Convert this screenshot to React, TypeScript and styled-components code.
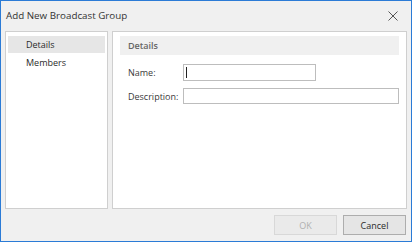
import styled, { createGlobalStyle } from "styled-components";

const GlobalStyle = createGlobalStyle`
  html, body {
    margin: 0;
    padding: 0;
    background: #ffffff;
  }
  * {
    box-sizing: border-box;
  }
`;

const App = () => {
  return (
    <>
      <GlobalStyle />
      <Dialog>
        <TitleBar>
          <Title>Add New Broadcast Group</Title>
          <CloseButton aria-label="Close">
            <svg width="10" height="10" viewBox="0 0 10 10">
              <path d="M0.5 0.5 L9.5 9.5 M9.5 0.5 L0.5 9.5" stroke="#555555" strokeWidth="1" />
            </svg>
          </CloseButton>
        </TitleBar>
        <Body>
          <NavPanel>
            <NavItem $selected>Details</NavItem>
            <NavItem>Members</NavItem>
          </NavPanel>
          <ContentPanel>
            <SectionHeader>Details</SectionHeader>
            <Form>
              <FieldRow>
                <Label>Name:</Label>
                <TextInput $width={133} $height={17} />
                <Caret />
              </FieldRow>
              <FieldRow>
                <Label>Description:</Label>
                <TextInput $width={216} $height={16} />
              </FieldRow>
            </Form>
          </ContentPanel>
        </Body>
        <Footer>
          <Button disabled>OK</Button>
          <Button>Cancel</Button>
        </Footer>
      </Dialog>
    </>
  );
};

const Dialog = styled.div`
  width: 412px;
  height: 242px;
  border: 1px solid #2b7bd6;
  background: #f0f0f0;
  display: flex;
  flex-direction: column;
  font-family: "Open Sans", "Noto Sans", sans-serif;
  font-size: 9px;
  color: #2a2a2a;
`;

const TitleBar = styled.div`
  height: 30px;
  display: flex;
  align-items: center;
  justify-content: space-between;
  padding: 0 13px 1px 5px;
`;

const Title = styled.div`
  font-size: 9.8px;
  color: #333333;
`;

const CloseButton = styled.div`
  display: flex;
  align-items: center;
`;

const Body = styled.div`
  display: flex;
  gap: 4px;
  padding: 0 4px;
  height: 178px;
`;

const NavPanel = styled.div`
  width: 103px;
  background: #ffffff;
  border: 1px solid #cfcfcf;
  padding: 4px 2px;
  display: flex;
  flex-direction: column;
  gap: 1px;
`;

const NavItem = styled.div<{ $selected?: boolean }>`
  height: 17px;
  line-height: 17px;
  padding-left: 18px;
  background: ${(p) => (p.$selected ? "#e6e6e6" : "transparent")};
`;

const ContentPanel = styled.div`
  flex: 1;
  background: #ffffff;
  border: 1px solid #cfcfcf;
  padding: 4px 7px;
  display: flex;
  flex-direction: column;
`;

const SectionHeader = styled.div`
  height: 19px;
  line-height: 19px;
  background: #f0f0f0;
  padding-left: 8px;
  color: #666666;
  font-weight: 600;
`;

const Form = styled.div`
  display: flex;
  flex-direction: column;
  gap: 7px;
  padding: 9px 0 0 8px;
`;

const FieldRow = styled.div`
  display: flex;
  align-items: center;
  position: relative;
`;

const Label = styled.div`
  width: 55px;
  flex-shrink: 0;
  white-space: nowrap;
  color: #3a3a3a;
`;

const TextInput = styled.div<{ $width: number; $height: number }>`
  width: ${(p) => p.$width}px;
  height: ${(p) => p.$height}px;
  border: 1px solid #bdbdbd;
  background: #ffffff;
`;

const Caret = styled.div`
  position: absolute;
  left: 58px;
  top: 3px;
  width: 1px;
  height: 11px;
  background: #222222;
`;

const Footer = styled.div`
  flex: 1;
  display: flex;
  justify-content: flex-end;
  align-items: center;
  gap: 6px;
  padding: 0 5px 0 0;
`;

const Button = styled.button`
  width: 63px;
  height: 20px;
  padding: 0;
  font-family: inherit;
  font-size: 9px;
  color: #2a2a2a;
  background: #e5e5e5;
  border: 1px solid #adadad;

  &:disabled {
    color: #b0b0b0;
    background: #eaeaea;
    border-color: #d8d8d8;
  }
`;

export default App;
